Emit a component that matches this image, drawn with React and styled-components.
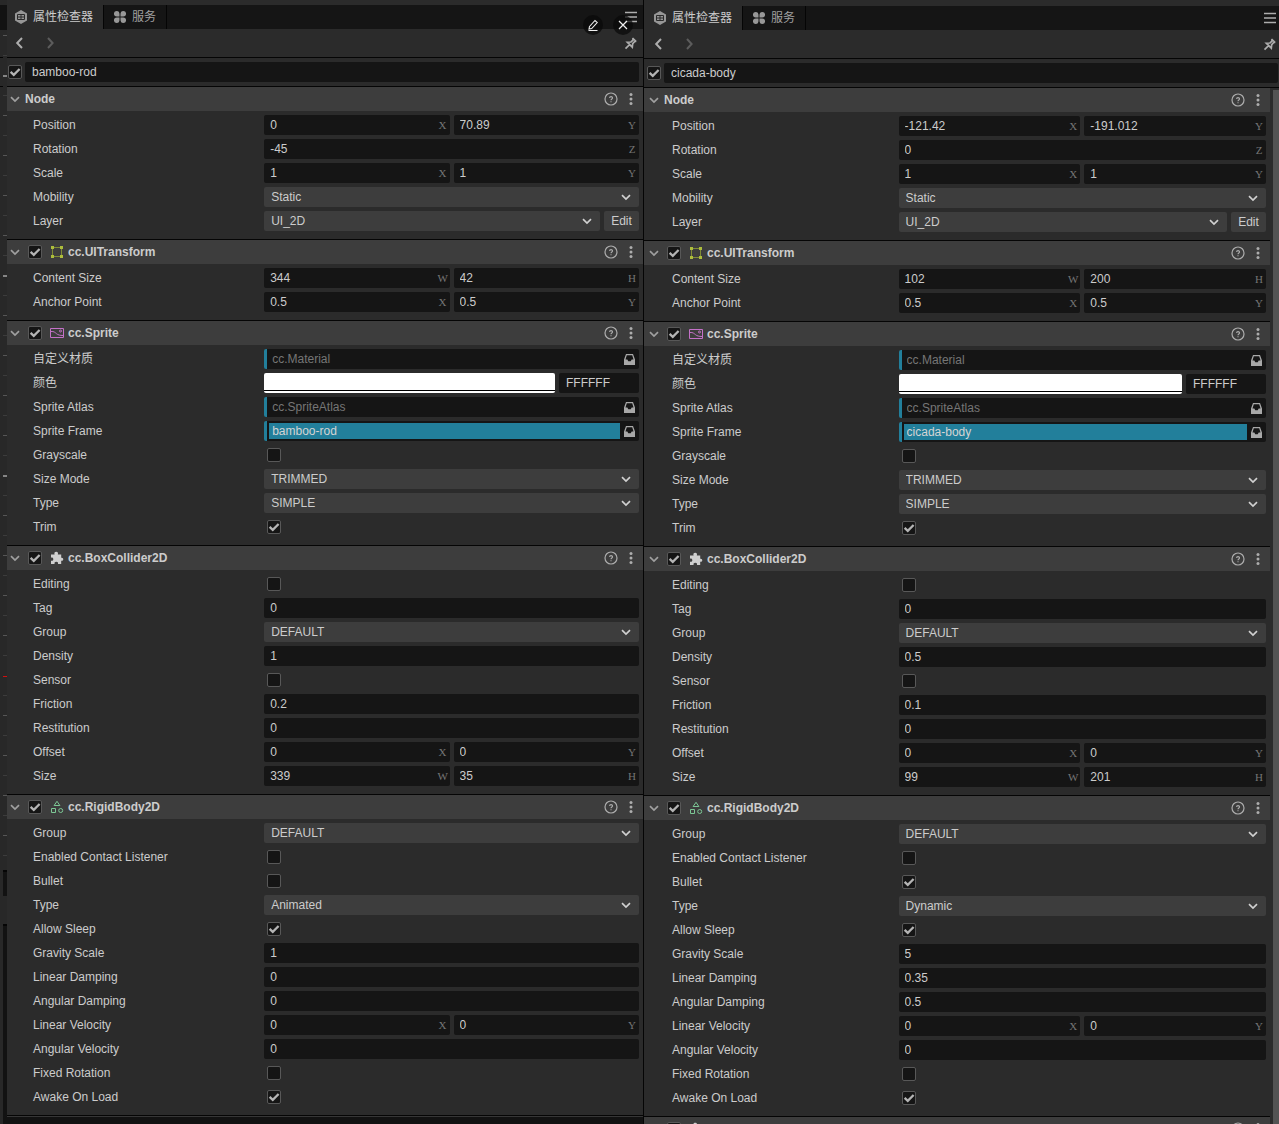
import React, { useId } from "react";
import styled, { createGlobalStyle } from "styled-components";

const c = {
  bg: "#2b2b2b",
  bar: "#3d3d3d",
  field: "#151515",
  line: "#050505",
  text: "#cccccc",
  icon: "#adadad",
  faint: "#757575",
  accent: "#227f9b",
};

const sans = '"Liberation Sans", Arial, "Noto Sans CJK SC", sans-serif';

const tick =
  "data:image/svg+xml," +
  encodeURIComponent(
    '<svg xmlns="http://www.w3.org/2000/svg" viewBox="0 0 12 12"><path d="M1.6 5.8l3.2 3L10.6 3" fill="none" stroke="#b4b4b4" stroke-width="2.3"/></svg>'
  );

const Global = createGlobalStyle`
  * { box-sizing: border-box; }
  body { margin: 0; background: ${c.bg}; color: ${c.text}; font: 12px/16px ${sans}; }
  input, select, button { font: inherit; color: inherit; margin: 0; border: 0; outline: 0; }
  svg { display: block; flex: none; }
`;

const Screen = styled.main`
  display: grid;
  grid-template-columns: 7px minmax(0, 637fr) minmax(0, 635fr);
  height: 100vh;
  overflow: hidden;
  background: ${c.bg};
`;

/* ---- edge of the neighbouring dock, with its ruler ---- */
const Ruler = styled.div`
  position: relative;
  z-index: 1;
  display: grid;
  grid-template-rows: 5px 25px 840px 26px 28px 1fr;
  background:
    linear-gradient(${c.line}, ${c.line}) 0 57px / 3px 1px no-repeat,
    linear-gradient(${c.line}, ${c.line}) 0 86px / 3px 1px no-repeat,
    #282828;
`;
const DarkBlock = styled.div`
  background: #121212;
  border-top: ${(p) => (p.$line ? 2 : 0)}px solid ${c.line};
  margin-left: ${(p) => (p.$line ? 3 : 0)}px;
`;
const Ticks = styled.div`
  margin-left: 3px;
  background:
    linear-gradient(#d01010, #d01010) 0 646px / 4px 1px no-repeat,
    linear-gradient(#282828, #282828) 0 645px / 4px 2px no-repeat,
    repeating-linear-gradient(transparent 0 45px, #858585 45px 47px, transparent 47px 200px),
    repeating-linear-gradient(transparent 0 5px, #565656 5px 6px, transparent 6px 25px, #3c3c3c 25px 26px, transparent 26px 40px);
`;

/* ---- panel frame ---- */
const Panel = styled.section`
  display: flex;
  flex-direction: column;
  min-width: 0;
  min-height: 0;
  padding-top: ${(p) => (p.$first ? 5 : 6)}px;
  margin-left: ${(p) => (p.$first ? -2 : 0)}px;
  margin-right: ${(p) => (p.$first ? 0 : -3)}px;
  border-right: ${(p) => (p.$first ? 1 : 0)}px solid ${c.line};
  background: ${c.bg};
`;
const TabBar = styled.div`
  display: flex;
  flex: none;
  height: 24px;
  background: ${c.field};
  color: #a8a8a8;
`;
const Tab = styled.button`
  display: flex;
  align-items: center;
  gap: 6px;
  padding: 0 10px;
  border-right: 1px solid ${c.line};
  background: ${(p) => (p.$active ? c.bg : "transparent")};
  color: ${(p) => (p.$active ? "#cccccc" : "#a0a0a0")};
`;
const Spacer = styled.span`
  flex: 1;
`;
const IconButton = styled.button`
  display: grid;
  place-items: center;
  width: ${(p) => p.$w || 20}px;
  padding: 0;
  background: none;
  color: ${(p) => (p.$dim ? "#5c5c5c" : c.icon)};
`;
const NavBar = styled.nav`
  display: flex;
  flex: none;
  gap: 11px;
  height: 29px;
  padding: 0 2px 0 4px;
  border-bottom: 1px solid ${c.line};
`;
const NameBar = styled.div`
  display: flex;
  flex: none;
  align-items: center;
  gap: 3px;
  height: 29px;
  padding-right: 4px;
  border-bottom: 1px solid ${c.line};
`;
const Scroller = styled.div`
  display: flex;
  flex: 1;
  min-height: 0;
`;
const Content = styled.div`
  display: flex;
  flex-direction: column;
  flex: 1;
  min-width: 0;
`;
const Thumb = styled.div`
  flex: none;
  width: 6px;
  margin: 2px 3px 0;
  background: #535353;
`;
const Footer = styled.div`
  flex: 1;
  border-top: 1px solid ${c.line};
  background: #121212;
  box-shadow: inset 0 1px #363636;
`;

/* ---- sections ---- */
const SectionHead = styled.header`
  display: flex;
  flex: none;
  align-items: center;
  gap: 4px;
  height: ${(p) => (p.$plain ? 24 : 25)}px;
  padding: 0 2px 0 4px;
  border-top: ${(p) => (p.$plain ? 0 : 1)}px solid ${c.line};
  background: ${c.bar};
`;
const Actions = styled.div`
  display: flex;
  align-self: stretch;
  margin-left: auto;
`;
const Title = styled.h2`
  margin: 0;
  font-size: 12px;
  font-weight: 700;
`;
const Badge = styled.span`
  margin-left: 4px;
`;
const Body = styled.div`
  display: flex;
  flex: none;
  flex-direction: column;
  gap: 4px;
  padding: 4px 4px 8px 28px;
`;
const Row = styled.div`
  display: grid;
  grid-template-columns: minmax(0, 267fr) minmax(0, 433fr);
  align-items: center;
  height: 20px;
`;
const Label = styled.label`
  white-space: nowrap;
`;
const Controls = styled.div`
  display: flex;
  align-items: center;
  gap: 4px;
  min-width: 0;
`;

/* ---- controls ---- */
const Check = styled.input.attrs({ type: "checkbox" })`
  appearance: none;
  flex: none;
  width: 14px;
  height: 14px;
  margin-left: 3px;
  border: 1px solid #585858;
  border-radius: 2px;
  background: ${c.field};
  &:checked { background: ${c.field} url("${tick}") center / 12px 12px no-repeat; }
`;
const Field = styled.span`
  display: flex;
  align-items: center;
  flex: ${(p) => (p.$fixed ? "none" : "1 1 0")};
  width: ${(p) => (p.$fixed ? "80px" : "auto")};
  min-width: 0;
  height: 20px;
  padding: 0 3px 0 ${(p) => p.$pad || 6}px;
  border-radius: 2px;
  background: ${c.field};
`;
const Text = styled.input`
  flex: 1;
  width: 100%;
  min-width: 0;
  height: 20px;
  padding: 0;
  background: none;
`;
const Unit = styled.span`
  display: flex;
  justify-content: center;
  width: 8px;
  color: ${c.faint};
  font: 11px/20px "Liberation Serif", serif;
`;
const SelectBox = styled.span`
  display: grid;
  grid-template-columns: 1fr 26px;
  align-items: center;
  justify-items: center;
  flex: 1;
  min-width: 0;
  svg { grid-area: 1 / 2; pointer-events: none; }
`;
const Select = styled.select`
  appearance: none;
  grid-area: 1 / 1 / 2 / 3;
  width: 100%;
  height: 20px;
  padding: 0 26px 0 7px;
  border-radius: 2px;
  background: ${c.bar};
`;
const EditButton = styled.button`
  width: 35px;
  height: 20px;
  padding: 0;
  border-radius: 2px;
  background: ${c.bar};
`;
const Swatch = styled.button`
  flex: 1;
  height: 20px;
  padding: 0;
  border-radius: 2px;
  background: linear-gradient(#fff 0 17px, #000 17px 18px, #fff 18px);
`;
const Asset = styled.span`
  display: flex;
  align-items: center;
  flex: 1;
  min-width: 0;
  height: 20px;
  border-left: 3px solid ${c.accent};
  border-radius: 2px;
  background: ${c.field};
`;
const AssetName = styled.input`
  flex: 1;
  min-width: 0;
  height: 16px;
  margin-left: 2px;
  padding: 0 3px;
  background: ${(p) => (p.$set ? c.accent : "transparent")};
  color: ${(p) => (p.$set ? "#d4d4d4" : c.faint)};
`;

/* ---- floating screenshot tools ---- */
const FloatTools = styled.div`
  position: absolute;
  top: 15px;
  left: calc(50% - 57px);
  z-index: 2;
  display: flex;
  gap: 10px;
`;
const RoundButton = styled.button`
  display: grid;
  place-items: center;
  width: 20px;
  height: 20px;
  padding: 0;
  border-radius: 50%;
  background: rgba(8, 8, 8, 0.7);
  color: #f0f0f0;
`;

/* ---- icons ---- */
const Svg = ({ s = 12, h, children, ...p }) => (
  <svg width={s} height={h || s} viewBox={`0 0 ${s} ${h || s}`} fill="none" stroke="currentColor" aria-hidden="true" {...p}>
    {children}
  </svg>
);
const Chevron = ({ color = "#b8b8b8", w = 1.7 }) => (
  <Svg color={color}><path d="M2 4.2l4 3.8 4-3.8" strokeWidth={w} /></Svg>
);
const Back = () => <Svg><path d="M9 1L4.200 6 9 11" strokeWidth="2" /></Svg>;
const Forward = () => <Svg><path d="M4 1l4.600 5L4 11" strokeWidth="2" /></Svg>;
const Menu = () => <Svg><path d="M0 1.500h12M0 6h12M0 10.500h12" strokeWidth="1.600" /></Svg>;
const Pin = () => (
  <Svg s={14}>
    <path
      d="M8.500 2l3.700 3.500M9 2.400v1.800L7 6 3.300 6.200l5 5L8.700 7.700l2-2.200h1.500M5.600 8.600L1.500 12.700"
      strokeWidth="1.700"
    />
  </Svg>
);
const Hex = () => (
  <Svg s={12} h={14} stroke="none">
    <path fill="#979797" d="M6 0l6 3.400v7.200L6 14 0 10.600V3.400z" />
    <path stroke="#2b2b2b" d="M2.500 4.500h7v5h-7zM2.500 7h7M6 4.500v5" />
  </Svg>
);
const Clover = () => (
  <Svg stroke="none" fill="#979797">
    <path d="M2.700 0a2.700 2.700 0 0 1 2.800 2.700v2.800H2.700a2.700 2.700 0 0 1 0-5.500zM9.300 0a2.700 2.700 0 0 1 0 5.500H6.500V2.700A2.700 2.700 0 0 1 9.300 0zM2.700 12a2.700 2.700 0 0 0 2.800-2.700V6.500H2.700a2.700 2.700 0 0 0 0 5.500zM9.300 12a2.700 2.700 0 0 0 0-5.500H6.500v2.800A2.700 2.700 0 0 0 9.300 12z" />
  </Svg>
);
const Help = () => (
  <Svg s={14}>
    <circle cx="7" cy="7" r="6" strokeWidth="1.200" />
    <path d="M5.600 6c0-1.900 2.900-1.800 2.900-.1C8.500 7 7 6.900 7 8.200M7 9.200v1" strokeWidth="1.100" />
  </Svg>
);
const Dots = () => (
  <Svg stroke="none" fill="currentColor">
    <circle cx="6" cy="1.500" r="1.500" /><circle cx="6" cy="6" r="1.500" /><circle cx="6" cy="10.500" r="1.500" />
  </Svg>
);
const Tray = () => (
  <Svg s={11} h={12} stroke="none">
    <path fill="#a8a8a8" fillRule="evenodd" d="M2 1h7l2 5.500V12H0V6.500zM2.800 2.200L1.500 6.500h1.800l1 1.700h2.400l1-1.700h1.800L8.200 2.200z" />
  </Svg>
);
const badges = {
  transform: (
    <Svg s={14} stroke="none">
      <path stroke="#7f8b36" d="M3 2.500h8M3 11.500h8M2.500 3v8M11.500 3v8" />
      <path fill="#adbd3c" d="M1 1h3v3H1zM10 1h3v3h-3zM1 10h3v3H1zM10 10h3v3h-3z" />
    </Svg>
  ),
  sprite: (
    <Svg s={14} stroke="#c471c8">
      <path d="M.5 2.500h13v9H.5zM1 5.500c3-.3 4 1 5.500 2.200S10 9.500 13 9.500" />
      <circle cx="10.500" cy="5" r="1" />
    </Svg>
  ),
  puzzle: (
    <Svg s={14} stroke="none" fill="#cfcfcf">
      <path d="M1 3.500h3.600C4 2 4.600.7 6.200.7S8.400 2 7.800 3.500h3.400v3.200h.6a1.500 1.500 0 0 1 0 3h-.6V13H8c.4-1.400-.4-2.300-1.700-2.300S4.200 11.600 4.600 13H1V9.800c1.400.3 2.300-.4 2.300-1.600S2.400 6.400 1 6.700z" />
    </Svg>
  ),
  rigid: (
    <Svg s={14} stroke="#7cc795">
      <path d="M7 1.300L9.900 5.500H4.100zM1.500 8.500h4v4h-4z" />
      <circle cx="10.700" cy="10.500" r="2" />
    </Svg>
  ),
};

/* ---- property rows ---- */
function Num({ id, value, unit, label }) {
  return (
    <Field>
      <Text id={id} defaultValue={value} aria-label={label} />
      {unit && <Unit>{unit}</Unit>}
    </Field>
  );
}

function Property({ row }) {
  const id = useId();
  const [name, kind, a, b] = row;
  let control;
  if (kind === "num") control = <Num id={id} value={a} unit={b} />;
  if (kind === "vec")
    control = a.map((v, i) => <Num key={i} id={i ? undefined : id} label={i ? `${name} ${b[i]}` : undefined} value={v} unit={b[i]} />);
  if (kind === "check") control = <Check id={id} defaultChecked={a} />;
  if (kind === "select")
    control = (
      <>
        <SelectBox>
          <Select id={id}><option>{a}</option></Select>
          <Chevron color="#d0d0d0" />
        </SelectBox>
        {b && <EditButton>{b}</EditButton>}
      </>
    );
  if (kind === "color")
    control = (
      <>
        <Swatch aria-label={name} />
        <Field $fixed $pad={7}><Text id={id} defaultValue={a} /></Field>
      </>
    );
  if (kind === "asset")
    control = (
      <Asset>
        <AssetName id={id} $set={b} defaultValue={a} />
        <IconButton $w={19} aria-label="Browse"><Tray /></IconButton>
      </Asset>
    );
  return (
    <Row>
      <Label htmlFor={id}>{name}</Label>
      <Controls>{control}</Controls>
    </Row>
  );
}

function Section({ title, badge, rows }) {
  return (
    <>
      <SectionHead $plain={!badge}>
        <Chevron color="#a0a0a0" />
        {badge && <Check defaultChecked aria-label={title || "Component"} />}
        {badge && <Badge>{badges[badge]}</Badge>}
        {title && <Title>{title}</Title>}
        <Actions>
          <IconButton aria-label="Help"><Help /></IconButton>
          <IconButton aria-label="More"><Dots /></IconButton>
        </Actions>
      </SectionHead>
      {rows && <Body>{rows.map((r) => <Property key={r[0]} row={r} />)}</Body>}
    </>
  );
}

const sectionsFor = (n) => [
  { title: "Node", rows: [
    ["Position", "vec", n.position, ["X", "Y"]],
    ["Rotation", "num", n.rotation, "Z"],
    ["Scale", "vec", ["1", "1"], ["X", "Y"]],
    ["Mobility", "select", "Static"],
    ["Layer", "select", "UI_2D", "Edit"],
  ] },
  { title: "cc.UITransform", badge: "transform", rows: [
    ["Content Size", "vec", n.content, ["W", "H"]],
    ["Anchor Point", "vec", ["0.5", "0.5"], ["X", "Y"]],
  ] },
  { title: "cc.Sprite", badge: "sprite", rows: [
    ["自定义材质", "asset", "cc.Material"],
    ["颜色", "color", "FFFFFF"],
    ["Sprite Atlas", "asset", "cc.SpriteAtlas"],
    ["Sprite Frame", "asset", n.name, true],
    ["Grayscale", "check", false],
    ["Size Mode", "select", "TRIMMED"],
    ["Type", "select", "SIMPLE"],
    ["Trim", "check", true],
  ] },
  { title: "cc.BoxCollider2D", badge: "puzzle", rows: [
    ["Editing", "check", false],
    ["Tag", "num", "0"],
    ["Group", "select", "DEFAULT"],
    ["Density", "num", n.density],
    ["Sensor", "check", false],
    ["Friction", "num", n.friction],
    ["Restitution", "num", "0"],
    ["Offset", "vec", ["0", "0"], ["X", "Y"]],
    ["Size", "vec", n.size, ["W", "H"]],
  ] },
  { title: "cc.RigidBody2D", badge: "rigid", rows: [
    ["Group", "select", "DEFAULT"],
    ["Enabled Contact Listener", "check", false],
    ["Bullet", "check", n.bullet],
    ["Type", "select", n.type],
    ["Allow Sleep", "check", true],
    ["Gravity Scale", "num", n.gravity],
    ["Linear Damping", "num", n.linear],
    ["Angular Damping", "num", n.angular],
    ["Linear Velocity", "vec", ["0", "0"], ["X", "Y"]],
    ["Angular Velocity", "num", "0"],
    ["Fixed Rotation", "check", false],
    ["Awake On Load", "check", true],
  ] },
];

const rod = {
  name: "bamboo-rod", position: ["0", "70.89"], rotation: "-45", content: ["344", "42"],
  density: "1", friction: "0.2", size: ["339", "35"], bullet: false, type: "Animated",
  gravity: "1", linear: "0", angular: "0",
};
const cicada = {
  name: "cicada-body", position: ["-121.42", "-191.012"], rotation: "0", content: ["102", "200"],
  density: "0.5", friction: "0.1", size: ["99", "201"], bullet: true, type: "Dynamic",
  gravity: "5", linear: "0.35", angular: "0.5",
};

function Inspector({ node, first }) {
  return (
    <Panel $first={first}>
      <TabBar>
        <Tab $active><Hex />属性检查器</Tab>
        <Tab><Clover />服务</Tab>
        <Spacer />
        <IconButton $w={24} aria-label="Menu"><Menu /></IconButton>
      </TabBar>
      <NavBar>
        <IconButton aria-label="Back"><Back /></IconButton>
        <IconButton $dim aria-label="Forward"><Forward /></IconButton>
        <Spacer />
        <IconButton aria-label="Pin"><Pin /></IconButton>
      </NavBar>
      <NameBar>
        <Check defaultChecked aria-label="Active" />
        <Field $pad={7}><Text defaultValue={node.name} aria-label="Name" /></Field>
      </NameBar>
      <Scroller>
        <Content>
          {sectionsFor(node).map((s) => <Section key={s.title} {...s} />)}
          {first ? <Footer /> : <Section badge="puzzle" />}
        </Content>
        {!first && <Thumb />}
      </Scroller>
    </Panel>
  );
}

export default function App() {
  return (
    <>
      <Global />
      <Screen>
        <Ruler>
          <span />
          <DarkBlock />
          <Ticks />
          <DarkBlock $line />
          <span />
          <DarkBlock $line />
        </Ruler>
        <Inspector node={rod} first />
        <Inspector node={cicada} />
      </Screen>
      <FloatTools>
        <RoundButton aria-label="Edit screenshot">
          <Svg><path d="M2.500 7.500L8 1.500l2.200 2L4.700 9.500l-2.700.5zM1.500 11.500h9" strokeWidth="1.100" /></Svg>
        </RoundButton>
        <RoundButton aria-label="Close screenshot">
          <Svg><path d="M2 2l8 8M10 2l-8 8" strokeWidth="1.200" /></Svg>
        </RoundButton>
      </FloatTools>
    </>
  );
}
